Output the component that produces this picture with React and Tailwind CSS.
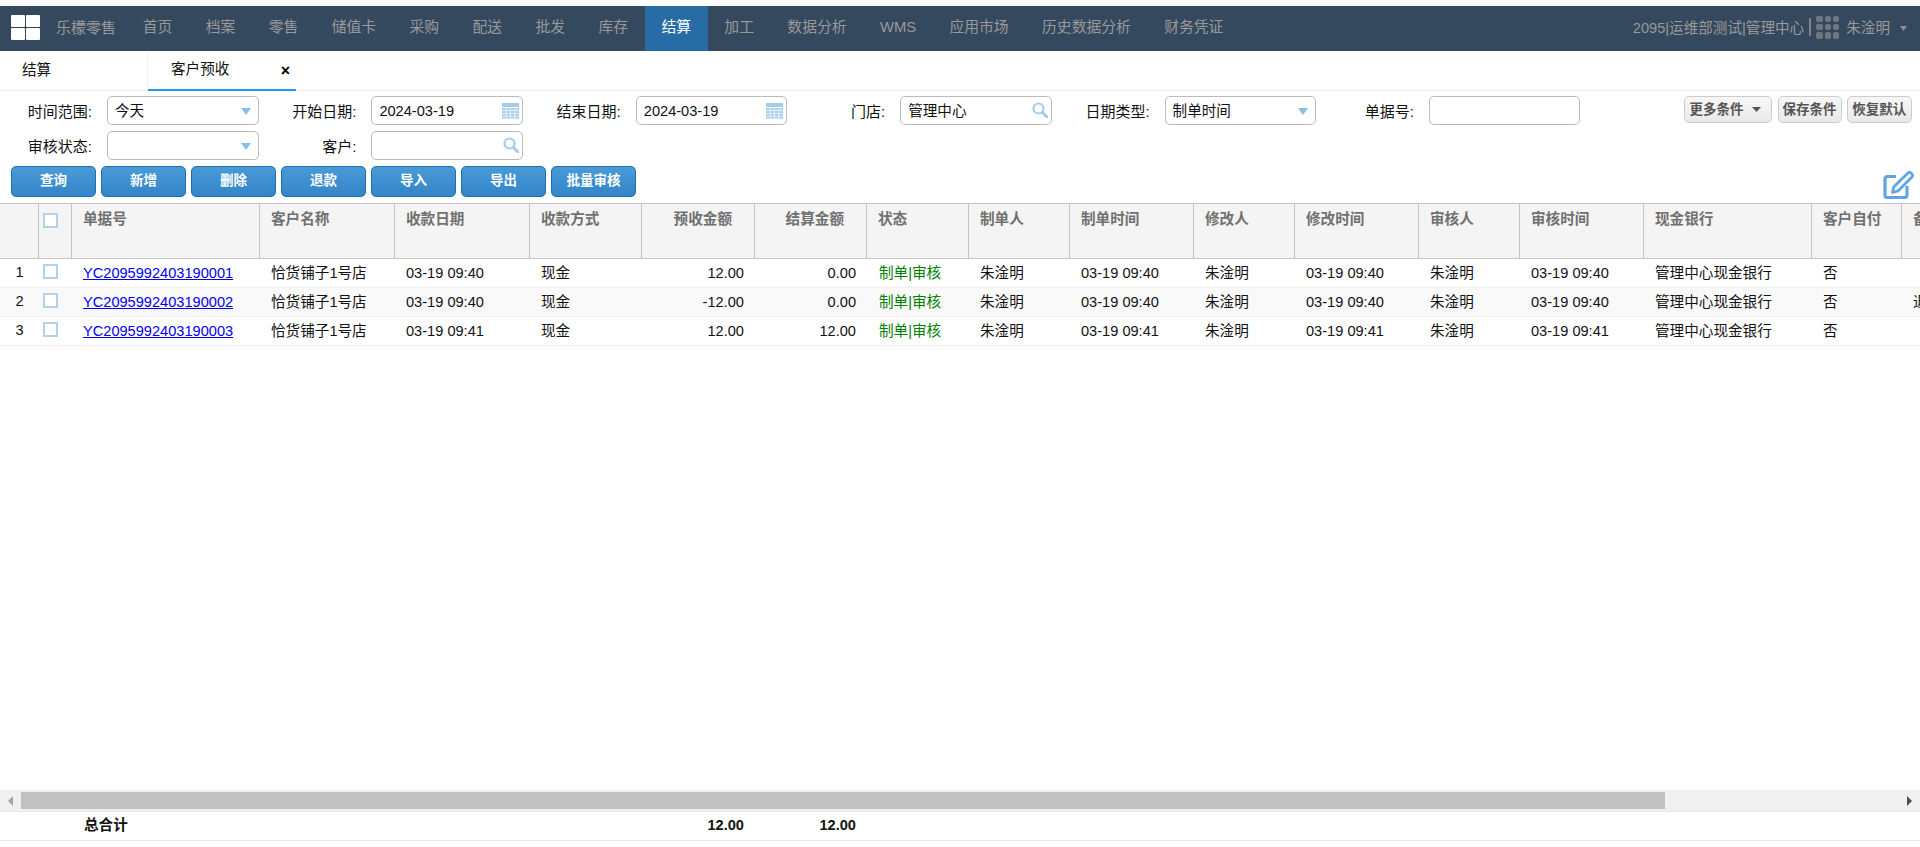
import React from 'react';

const FONT = "font-['Liberation_Sans','Noto_Sans_CJK_SC',sans-serif]";
const GRID = 'grid grid-cols-[39px_33px_188px_135px_135px_112px_113px_112px_102px_101px_124px_101px_124px_101px_124px_168px_90px_120px] w-[2040px]';

const NAV_ITEMS = ['首页', '档案', '零售', '储值卡', '采购', '配送', '批发', '库存', '结算', '加工', '数据分析', 'WMS', '应用市场', '历史数据分析', '财务凭证'];

const COLUMNS = [
  { key: 'no', title: '单据号' },
  { key: 'customer', title: '客户名称' },
  { key: 'payDate', title: '收款日期' },
  { key: 'payType', title: '收款方式' },
  { key: 'advance', title: '预收金额', right: true },
  { key: 'settled', title: '结算金额', right: true },
  { key: 'status', title: '状态' },
  { key: 'maker', title: '制单人' },
  { key: 'makeTime', title: '制单时间' },
  { key: 'editor', title: '修改人' },
  { key: 'editTime', title: '修改时间' },
  { key: 'auditor', title: '审核人' },
  { key: 'auditTime', title: '审核时间' },
  { key: 'bank', title: '现金银行' },
  { key: 'selfPay', title: '客户自付' },
  { key: 'remark', title: '备注' },
];

const row = (no, advance, settled, time, remark) => ({
  no,
  customer: '恰货铺子1号店',
  payDate: time,
  payType: '现金',
  advance,
  settled,
  status: '制单|审核',
  maker: '朱淦明',
  makeTime: time,
  editor: '朱淦明',
  editTime: time,
  auditor: '朱淦明',
  auditTime: time,
  bank: '管理中心现金银行',
  selfPay: '否',
  remark,
});

const ROWS = [
  row('YC2095992403190001', '12.00', '0.00', '03-19 09:40', ''),
  row('YC2095992403190002', '-12.00', '0.00', '03-19 09:40', '退款'),
  row('YC2095992403190003', '12.00', '12.00', '03-19 09:41', ''),
];

const ACTIONS = ['查询', '新增', '删除', '退款', '导入', '导出', '批量审核'];

const Arrow = () => (
  <svg width="10" height="7" viewBox="0 0 10 7" className="absolute right-[7px] top-[11px]">
    <path d="M0 0H10L5 7Z" fill="#85bfe8" />
  </svg>
);

const CalendarIcon = () => (
  <svg width="17" height="16" viewBox="0 0 17 16" className="absolute right-[3px] top-[6px]">
    <rect width="17" height="4" fill="#a3cbeb" />
    {[0, 1, 2, 3].map((r) =>
      [0, 1, 2, 3].map((c) => (
        <rect key={`${r}-${c}`} x={c * 4.4} y={5 + r * 2.8} width="3.8" height="2.2" fill="#a9d0ee" />
      ))
    )}
  </svg>
);

const SearchIcon = () => (
  <svg width="16" height="16" viewBox="0 0 16 16" className="absolute right-[3px] top-[5px]" fill="none">
    <circle cx="6.5" cy="6.5" r="5" stroke="#a3cdeb" strokeWidth="2.2" />
    <path d="M10.5 10.5L15 15" stroke="#a3cdeb" strokeWidth="3" strokeLinecap="round" />
  </svg>
);

const Field = ({ label, value, icon }) => (
  <div className="flex items-center w-[264.4px] shrink-0">
    <label className="w-[92px] mr-[15px] pt-[3px] text-right text-[15px] whitespace-nowrap text-[#111]">{label}</label>
    <div className="relative w-[151.5px] h-[29px] border border-[#bbb] rounded-[5px] bg-white pl-[7px] leading-[28px] text-[#111]">
      {value}
      {icon === 'arrow' && <Arrow />}
      {icon === 'calendar' && <CalendarIcon />}
      {icon === 'search' && <SearchIcon />}
    </div>
  </div>
);

const Checkbox = () => (
  <div className="w-[14.5px] h-[14.5px] ml-[4px] border-2 border-[#b0d2ea] bg-white" />
);

const GhostButton = ({ className, children }) => (
  <button className={`h-[27px] border border-[#ccc] rounded-[5px] bg-gradient-to-b from-[#f7f7f7] to-[#e9e9e9] font-bold text-[#555] text-[13.5px] leading-[22px] whitespace-nowrap ${className}`}>
    {children}
  </button>
);

export default function App() {
  return (
    <div className={`${FONT} h-[847px] w-[1920px] flex flex-col overflow-hidden bg-white text-[14.6px] pt-[6px]`}>
      {/* Top bar */}
      <header className="h-[45px] shrink-0 flex items-stretch bg-[#34495e] text-[#999]">
        <div className="ml-[11px] mt-[9px] w-[29px] h-[25px] grid grid-cols-2 gap-x-[1.5px] gap-y-[1px]">
          <div className="bg-white rounded-[1px]" />
          <div className="bg-white rounded-[1px]" />
          <div className="bg-white rounded-[1px]" />
          <div className="bg-white rounded-[1px]" />
        </div>
        <div className="ml-[16px] mr-[10px] text-[15px] leading-[43px] whitespace-nowrap">乐檬零售</div>
        <nav className="flex items-stretch text-[14.8px] leading-[43px]">
          {NAV_ITEMS.map((item) => (
            <a key={item} className={item === '结算' ? 'px-[16.7px] whitespace-nowrap bg-[#286ca5] text-white' : 'px-[16.7px] whitespace-nowrap'}>
              {item}
            </a>
          ))}
        </nav>
        <div className="ml-auto pr-[13px] flex items-center">
          <span className="whitespace-nowrap">2095|运维部测试|管理中心</span>
          <span className="w-[2px] h-[18px] mx-[5px] mb-[3px] bg-[#7d8388]" />
          <div className="w-[23px] h-[23px] mb-[3px] grid grid-cols-3 gap-[2px]">
            {[0, 1, 2, 3, 4, 5, 6, 7, 8].map((i) => (
              <div key={i} className="bg-[#6f767c] rounded-[2px]" />
            ))}
          </div>
          <span className="ml-[7px] whitespace-nowrap">朱淦明</span>
          <svg width="7" height="5" viewBox="0 0 7 5" className="ml-[10px]">
            <path d="M0 0H7L3.5 5Z" fill="#8a9097" />
          </svg>
        </div>
      </header>

      {/* Tabs */}
      <div className="h-[40px] shrink-0 flex border-b border-[#eee] text-[#111]">
        <div className="w-[148px] pl-[22px] leading-[38px] border-r border-[#eee]">结算</div>
        <div className="relative w-[148px] pl-[23px] leading-[37px] border-b-2 border-[#1e9aef] h-[40px]">
          客户预收
          <span className="absolute right-[6px] top-[8px] font-bold text-[16px] leading-[24px] text-black">×</span>
        </div>
      </div>

      {/* Filters */}
      <div className="shrink-0 pt-[5px] flex flex-col gap-[6px]">
        <div className="flex">
          <Field label="时间范围:" value="今天" icon="arrow" />
          <Field label="开始日期:" value="2024-03-19" icon="calendar" />
          <Field label="结束日期:" value="2024-03-19" icon="calendar" />
          <Field label="门店:" value="管理中心" icon="search" />
          <Field label="日期类型:" value="制单时间" icon="arrow" />
          <Field label="单据号:" value="" />
          <div className="ml-auto pr-[8.5px] flex gap-[5.5px]">
            <GhostButton className="w-[88.5px] pl-[5px] flex items-center gap-[8px]">
              更多条件
              <svg width="9" height="5" viewBox="0 0 9 5">
                <path d="M0 0H9L4.5 5Z" fill="#555" />
              </svg>
            </GhostButton>
            <GhostButton className="w-[64px]">保存条件</GhostButton>
            <GhostButton className="w-[64.5px]">恢复默认</GhostButton>
          </div>
        </div>
        <div className="flex">
          <Field label="审核状态:" value="" icon="arrow" />
          <Field label="客户:" value="" icon="search" />
        </div>
        <div className="h-[31px] flex items-start pl-[11px] gap-[5px]">
          {ACTIONS.map((action) => (
            <button key={action} className="w-[85px] h-[31px] border border-[#1d70ab] rounded-[5px] bg-gradient-to-b from-[#4a9ad7] to-[#3285c8] text-white font-bold text-[13.5px]">
              {action}
            </button>
          ))}
          <svg width="32" height="28" viewBox="0 0 32 28" fill="none" className="ml-auto mr-[5px] mt-[5px] shrink-0">
            <path d="M13 5.5H4.5a2.5 2.5 0 0 0-2.5 2.5v16.5a2 2 0 0 0 2 2h17.5a2.5 2.5 0 0 0 2.5-2.5V15" stroke="#60a5e4" strokeWidth="3.2" />
            <path d="M9.5 21.5l1.2-5.5L25 2q1.5-1.2 3 0l1 1q1.2 1.5 0 3L15 20z" stroke="#60a5e4" strokeWidth="2.8" strokeLinejoin="round" />
          </svg>
        </div>
      </div>

      {/* Table */}
      <div className="mt-[6px] flex-1 min-h-0 overflow-hidden">
        <div className={`${GRID} h-[56px] border-y border-[#c4c4c4] bg-[#f4f4f4]`}>
          <div className="border-r border-[#c4c4c4]" />
          <div className="border-r border-[#c4c4c4] pt-[9px]">
            <Checkbox />
          </div>
          {COLUMNS.map((col) => (
            <div
              key={col.key}
              className={col.right
                ? 'border-r border-[#c4c4c4] pr-[22px] pt-[5px] text-right font-bold text-[#707070] leading-[20px] whitespace-nowrap'
                : 'border-r border-[#c4c4c4] pl-[11px] pt-[5px] font-bold text-[#707070] leading-[20px] whitespace-nowrap'}
            >
              {col.title}
            </div>
          ))}
        </div>
        {ROWS.map((r, i) => (
          <div key={r.no} className={i === 1 ? `${GRID} h-[29px] border-b border-[#eee] bg-[#f9f9f9]` : `${GRID} h-[29px] border-b border-[#eee]`}>
            <div className="text-center leading-[27px] text-[#111]">{i + 1}</div>
            <div className="pt-[5px]">
              <Checkbox />
            </div>
            {COLUMNS.map((col) => {
              if (col.key === 'no') {
                return <a key={col.key} className="pl-[11px] leading-[29px] text-[#0000ee] underline whitespace-nowrap">{r.no}</a>;
              }
              if (col.key === 'status') {
                return <div key={col.key} className="pl-[12px] leading-[29px] text-[#008000] whitespace-nowrap">{r.status}</div>;
              }
              return (
                <div key={col.key} className={col.right ? 'pr-[11px] leading-[29px] text-right text-[#111] whitespace-nowrap' : 'pl-[11px] leading-[29px] text-[#111] whitespace-nowrap'}>
                  {r[col.key]}
                </div>
              );
            })}
          </div>
        ))}
      </div>

      {/* Horizontal scrollbar */}
      <div className="h-[22px] shrink-0 flex items-center bg-[#f0f0f0] border-b border-[#e8e8e8] relative">
        <svg width="5" height="10" viewBox="0 0 5 10" className="ml-[8px] shrink-0">
          <path d="M5 0V10L0 5Z" fill="#a3a3a3" />
        </svg>
        <div className="ml-[8px] w-[1644px] h-[17px] bg-[#c1c1c1]" />
        <svg width="5" height="10" viewBox="0 0 5 10" className="ml-auto mr-[8px] shrink-0">
          <path d="M0 0V10L5 5Z" fill="#505050" />
        </svg>
      </div>

      {/* Totals */}
      <div className={`${GRID} h-[29px] shrink-0 border-b border-[#e8e8e8] font-bold text-[#111] leading-[27px]`}>
        <div />
        <div />
        <div className="pl-[12px]">总合计</div>
        <div />
        <div />
        <div />
        <div className="pr-[11px] text-right">12.00</div>
        <div className="pr-[11px] text-right">12.00</div>
      </div>
      <div className="h-[6px] shrink-0" />
    </div>
  );
}
